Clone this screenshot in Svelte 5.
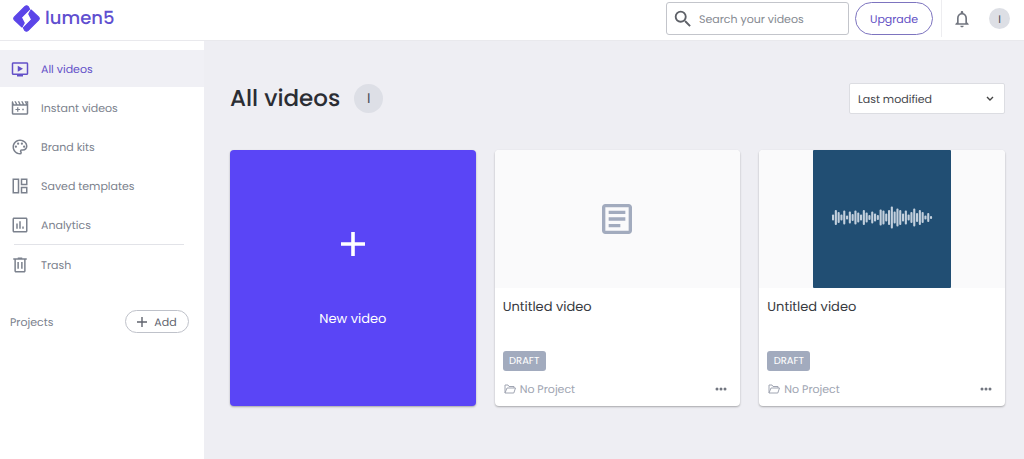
<script>
  const nav = [
    { label: 'All videos', icon: 'videos', active: true },
    { label: 'Instant videos', icon: 'instant' },
    { label: 'Brand kits', icon: 'palette' },
    { label: 'Saved templates', icon: 'templates' },
    { label: 'Analytics', icon: 'analytics' }
  ];

  const paths = {
    videos: 'M21 3H3c-1.1 0-2 .9-2 2v13c0 1.1.9 2 2 2h5v2h8v-2h5c1.1 0 2-.9 2-2V5c0-1.1-.9-2-2-2zm0 15H3V5h18v13zM9 7.5v8l7-4z',
    instant: 'M18 3l2 4h-2.500l-2-4h-2l2 4H13l-2-4H9l2 4H8.500l-2-4h-2l2 4H4L2.500 3H2C1.400 3 1 3.700 1 4.500V19c0 1.100.9 2 2 2h18c1.100 0 2-.9 2-2V3h-3l2 3h-.5L20 3h-2zM3 9h18v10H3V9zm5.200 2v2.200H6v1.600h2.200V17h1.600v-2.200H12v-1.600H9.800V11H8.200zM15 13v2h2v-2h-2z',
    palette: 'M12 22C6.490 22 2 17.510 2 12S6.490 2 12 2s10 4.040 10 9c0 3.310-2.690 6-6 6h-1.770c-.28 0-.5.22-.5.5 0 .12.05.23.13.33.41.47.64 1.060.64 1.670A2.500 2.500 0 0 1 12 22zm0-18c-4.410 0-8 3.590-8 8s3.590 8 8 8c.28 0 .5-.22.5-.5a.54.54 0 0 0-.14-.35c-.41-.46-.63-1.050-.63-1.650a2.500 2.500 0 0 1 2.500-2.500H16c2.210 0 4-1.790 4-4 0-3.860-3.590-7-8-7zM6.500 10a1.500 1.500 0 1 0 0 3 1.500 1.500 0 0 0 0-3zm3-4a1.500 1.500 0 1 0 0 3 1.500 1.500 0 0 0 0-3zm5 0a1.500 1.500 0 1 0 0 3 1.500 1.500 0 0 0 0-3zm3 4a1.500 1.500 0 1 0 0 3 1.500 1.500 0 0 0 0-3z',
    templates: 'M2 2h9v20H2V2zm2 2v16h5V4H4zM13 2h9v9h-9V2zm2 2v5h5V4h-5zM13 13h9v9h-9v-9zm2 2v5h5v-5h-5z',
    analytics: 'M20 2H4c-1.100 0-2 .9-2 2v16c0 1.100.9 2 2 2h16c1.100 0 2-.9 2-2V4c0-1.100-.9-2-2-2zm0 18H4V4h16v16zM7 10h2v7H7zM11 7h2v10h-2zM15 14h2v3h-2z',
    trash: 'M15 3V2H9v1H3v2h1.500v15c0 1.100.9 2 2 2h11c1.100 0 2-.9 2-2V5H21V3h-6zm2.500 17h-11V5h11v15zM8.500 8h2v9h-2zM13.500 8h2v9h-2z',
    search: 'M15.500 14h-.79l-.28-.27A6.470 6.470 0 0 0 16 9.500 6.500 6.500 0 1 0 9.500 16c1.610 0 3.090-.59 4.230-1.570l.27.28v.79l5 4.990L20.490 19l-4.990-5zm-6 0C7.010 14 5 11.990 5 9.500S7.010 5 9.500 5 14 7.010 14 9.500 11.990 14 9.500 14z',
    bell: 'M12 22c1.100 0 2-.9 2-2h-4c0 1.100.9 2 2 2zm6-6v-5c0-3.070-1.630-5.640-4.500-6.320V4c0-.83-.67-1.500-1.500-1.500s-1.500.67-1.500 1.500v.68C7.640 5.360 6 7.920 6 11v5l-2 2v1h16v-1l-2-2zm-2 1H8v-6c0-2.480 1.510-4.500 4-4.500s4 2.020 4 4.500v6z',
    article: 'M19 3H5c-1.100 0-2 .9-2 2v14c0 1.100.9 2 2 2h14c1.100 0 2-.9 2-2V5c0-1.100-.9-2-2-2zm0 16H5V5h14v14zM7 7h10v2H7zM7 11h10v2H7zM7 15h7v2H7z'
  };

  const bars = [6, 15, 11, 6, 14, 4, 12, 7, 14, 10, 6, 15, 10, 5, 12, 8, 5, 16, 14, 8, 15, 22, 12, 18, 15, 8, 14, 6, 11, 18, 9, 15, 11, 4, 9, 3];
  const cards = [{ title: 'Untitled video', wave: false }, { title: 'Untitled video', wave: true }];
</script>

{#snippet icon(name, size)}
  <svg width={size} height={size} viewBox="0 0 24 24" fill="currentColor" fill-rule="evenodd" aria-hidden="true"><path d={paths[name]} /></svg>
{/snippet}

<div class="app">
  <header>
    <a class="brand" href="#home">
      <svg width="27" height="27" viewBox="0 0 27 27" fill="#5b45e8" stroke="#5b45e8" stroke-width="1.200" stroke-linejoin="round" aria-hidden="true">
        <path d="M11.800 1.600Q13.600 0 15.200 1.600L16.600 4.200 8.400 12.400 11.200 18 9 22 1.500 15Q0 13.500 1.500 12Z" />
        <path d="M15.200 25.400Q13.400 27 11.800 25.400L10.400 22.800 18.600 14.600 15.800 9 18 5 25.500 12Q27 13.500 25.500 15Z" />
      </svg>
      <span>lumen5</span>
    </a>
    <label class="search">
      {@render icon('search', 22)}
      <input type="search" placeholder="Search your videos" aria-label="Search your videos" />
    </label>
    <button class="upgrade">Upgrade</button>
    <div class="account">
      <button class="bell" aria-label="Notifications">{@render icon('bell', 20)}</button>
      <button class="avatar" aria-label="Account">I</button>
    </div>
  </header>

  <div class="body">
    <aside>
      <nav>
        {#each nav as item}
          <a href="#nav" class:active={item.active}>{@render icon(item.icon, 18)}<span>{item.label}</span></a>
        {/each}
        <hr />
        <a href="#trash">{@render icon('trash', 18)}<span>Trash</span></a>
      </nav>
      <div class="projects">
        <span>Projects</span>
        <button>
          <svg width="10" height="10" viewBox="0 0 10 10" stroke="currentColor" stroke-width="1.400" aria-hidden="true"><path d="M5 0v10M0 5h10" /></svg>
          Add
        </button>
      </div>
    </aside>

    <main>
      <div class="heading">
        <h1>All videos</h1>
        <span class="member">I</span>
        <div class="sort">
          <select aria-label="Sort videos"><option>Last modified</option></select>
          <svg width="8" height="6" viewBox="0 0 8 6" fill="none" stroke="#444" stroke-width="1.400" aria-hidden="true"><path d="M1 1l3 3 3-3" /></svg>
        </div>
      </div>
      <div class="grid">
        <button class="new">
          <svg width="24" height="24" viewBox="0 0 24 24" stroke="#fff" stroke-width="3.600" aria-hidden="true"><path d="M12 0v24M0 12h24" /></svg>
          <span>New video</span>
        </button>
        {#each cards as card}
          <article>
            <div class="thumb">
              {#if card.wave}
                <svg width="138" height="138" viewBox="0 0 138 138" aria-hidden="true">
                  <rect width="138" height="138" rx="1" fill="#214e73" />
                  {#each bars as h, i}
                    <rect x={19 + i * 2.8} y={67.500 - h / 2} width="2.100" height={h} rx=".9" fill="#c3d0dd" />
                  {/each}
                </svg>
              {:else}
                {@render icon('article', 40)}
              {/if}
            </div>
            <div class="info">
              <h2>{card.title}</h2>
              <span class="badge">DRAFT</span>
              <div class="foot">
                <svg width="12" height="10" viewBox="0 0 12 10" fill="none" stroke="currentColor" stroke-linejoin="round" aria-hidden="true"><path d="M1 9V1h3l1 1.500h5V4M1 9l2-5h8.500L9.800 9z" /></svg>
                <span>No Project</span>
                <button aria-label="More options">
                  <svg width="12" height="4" viewBox="0 0 12 4" fill="#71757f" aria-hidden="true"><circle cx="2" cy="2" r="1.500" /><circle cx="6" cy="2" r="1.500" /><circle cx="10" cy="2" r="1.500" /></svg>
                </button>
              </div>
            </div>
          </article>
        {/each}
      </div>
    </main>
  </div>
</div>

<style>
  :global(body) { background: #fff; }
  .app { min-height: 100vh; display: flex; flex-direction: column; font: 400 11px/18px Poppins, Inter, sans-serif; color: #7b818d; text-rendering: geometricPrecision; }
  .app * { box-sizing: border-box; }
  button, input, select { font: inherit; color: inherit; margin: 0; text-rendering: inherit; }
  button { cursor: pointer; background: none; border: 0; padding: 0; }
  a { text-decoration: none; color: inherit; }
  svg { flex: none; display: block; }
  header { display: flex; align-items: flex-start; padding: 2px 14px 0 13px; height: 41px; border-bottom: 1px solid #e9e9ed; background: #fff; }
  .brand { display: flex; align-items: center; gap: 5px; height: 33px; margin-right: auto; color: #5f4fd0; font-size: 18px; font-weight: 500; }
  .search { display: flex; align-items: center; gap: 5px; width: 183px; height: 33px; border: 1px solid #c3c5cb; border-radius: 3px; padding: 0 5px; color: #5d6067; }
  .search input { flex: 1; min-width: 0; border: 0; outline: 0; padding: 0; background: none; }
  .search input::placeholder { color: #858991; opacity: 1; }
  .upgrade { height: 33px; width: 78px; margin: 0 8px 0 6px; border: 1px solid #7d74bf; border-radius: 17px; color: #5f4fc4; }
  .account { display: flex; align-items: center; gap: 17px; margin-top: -2px; height: 37px; padding-left: 10px; border-left: 1px solid #ededf0; }
  .bell { color: #71757f; }
  .avatar { width: 21px; height: 21px; border-radius: 50%; background: #dddfe5; color: #4a4d55; }
  .body { flex: 1; display: flex; }
  aside { width: 204px; flex: none; padding-top: 9px; background: #fff; }
  nav { display: flex; flex-direction: column; gap: 2px; }
  nav a { display: flex; align-items: center; gap: 12px; height: 37px; padding: 0 11px; }
  nav a.active { background: #f0f0f5; color: #6350c8; }
  hr { width: 170px; border: 0; border-top: 1px solid #e2e3e8; margin: -1px 0 -1px 14px; }
  .projects { display: flex; justify-content: space-between; align-items: center; padding: 27px 15px 0 10px; }
  .projects button { display: flex; align-items: center; justify-content: center; gap: 7px; width: 64px; height: 23px; border: 1px solid #bfc2ca; border-radius: 12px; color: #60646e; }
  main { flex: 1; min-width: 0; background: #eeeef3; padding: 42px 19px 52px 26px; }
  .heading { display: flex; align-items: center; height: 31px; margin-bottom: 36px; }
  h1 { margin: 0; font-size: 23px; line-height: 30px; font-weight: 500; color: #2b2d33; }
  .member { width: 29px; height: 29px; margin-left: 14px; border-radius: 50%; background: #dddfe6; color: #4a4d55; font-size: 14px; line-height: 29px; text-align: center; }
  .sort { position: relative; margin-left: auto; }
  select { appearance: none; width: 156px; height: 31px; padding: 0 8px; border: 1px solid #dcdde2; border-radius: 2px; background: #fff; color: #44464c; }
  .sort svg { position: absolute; right: 11px; top: 13px; pointer-events: none; }
  .grid { display: grid; grid-template-columns: repeat(3, 1fr); gap: 19px; }
  .new, article { border-radius: 4px; box-shadow: 0 1px 2px #0000004d; overflow: hidden; }
  .new { background: #5a45f6; color: #fff; font-size: 13px; display: flex; flex-direction: column; align-items: center; justify-content: center; gap: 54px; padding-top: 4px; }
  article { background: #fff; }
  .thumb { height: 138px; display: flex; align-items: center; justify-content: center; background: #fafafb; color: #a2abbe; }
  .info { padding: 10px 8px 8px; }
  h2 { margin: 0; font-size: 13px; line-height: 18px; font-weight: 400; color: #383a40; }
  .badge { display: block; width: 43px; height: 20px; margin-top: 35px; border-radius: 3px; background: #a2abbe; color: #fff; font-size: 10px; line-height: 20px; text-align: center; }
  .foot { display: flex; align-items: center; gap: 4px; margin-top: 9px; padding: 0 5px 0 1px; color: #a0a5b2; }
  .foot button { margin-left: auto; padding: 4px 0; }
</style>
